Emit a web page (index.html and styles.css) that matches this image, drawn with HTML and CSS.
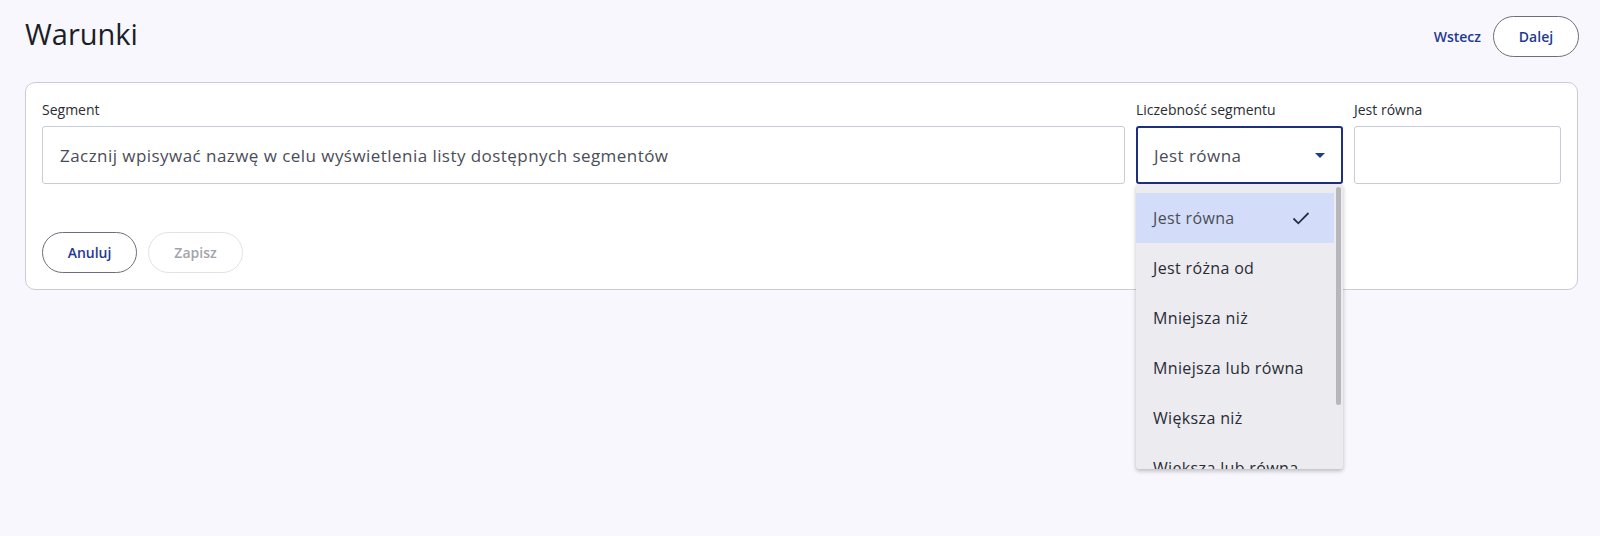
FILE: index.html
```html
<!DOCTYPE html>
<html lang="pl">

<head>
    <meta charset="UTF-8">
    <meta name="viewport" content="width=device-width, initial-scale=1.0">
    <title>Warunki</title>
    <link rel="stylesheet" href="styles.css">
</head>

<body>
    <div class="top">
        <h1 class="title">Warunki</h1>
        <div class="nav">
            <a class="link" href="#">Wstecz</a>
            <button class="btn">Dalej</button>
        </div>
    </div>

    <div class="card">
        <div class="fields">
            <div class="field">
                <label class="label">Segment</label>
                <div class="input">Zacznij wpisywać nazwę w celu wyświetlenia listy dostępnych segmentów</div>
            </div>
            <div class="field drop">
                <label class="label">Liczebność segmentu</label>
                <div class="input select">
                    <span>Jest równa</span>
                    <svg class="caret" width="10" height="5" viewBox="0 0 10 5"><path d="M0 0h10L5 5z" fill="#1f3a93"/></svg>
                </div>
                <ul class="menu">
                    <li class="item on">Jest równa
                        <svg class="check" width="18" height="14" viewBox="0 0 18 14"><path d="M1.5 7.5l4.8 4.8L16.5 2" fill="none" stroke="#2a2f45" stroke-width="1.8"/></svg>
                    </li>
                    <li class="item">Jest różna od</li>
                    <li class="item">Mniejsza niż</li>
                    <li class="item">Mniejsza lub równa</li>
                    <li class="item">Większa niż</li>
                    <li class="item">Większa lub równa</li>
                </ul>
            </div>
            <div class="field">
                <label class="label">Jest równa</label>
                <div class="input"></div>
            </div>
        </div>
        <div class="actions">
            <button class="btn">Anuluj</button>
            <button class="btn off">Zapisz</button>
        </div>
    </div>
</body>

</html>
```

FILE: styles.css
```css
* {
    margin: 0;
    padding: 0;
    box-sizing: border-box;
    list-style: none;
}
html,
body {
    min-height: 100vh;
}
body {
    background: #f7f7fd;
    font-family: "Open Sans", "Noto Sans", sans-serif;
    color: #23252d;
}
.top {
    display: flex;
    justify-content: space-between;
    align-items: flex-start;
    padding: 16px 21px 0 25px;
}
.title {
    font-size: 29px;
    font-weight: 400;
    line-height: 36px;
    color: #1c1e26;
}
.nav {
    display: flex;
    align-items: center;
    gap: 12px;
}
.link {
    color: #1f3a93;
    font-size: 14px;
    font-weight: 600;
    text-decoration: none;
}
.btn {
    font-family: inherit;
    font-size: 14px;
    font-weight: 600;
    color: #1f3a93;
    background: #fff;
    border: 1px solid #6c6f7a;
    border-radius: 21px;
    height: 41px;
    width: 86px;
    cursor: pointer;
}
.card {
    margin: 25px 22px 0 25px;
    background: #fff;
    border: 1px solid #c9cbd9;
    border-radius: 10px;
    padding: 17px 16px 16px 16px;
}
.fields {
    display: grid;
    grid-template-columns: 1fr 207px 207px;
    gap: 11px;
}
.field {
    display: flex;
    flex-direction: column;
    gap: 6px;
}
.drop {
    position: relative;
}
.label {
    font-size: 14px;
    line-height: 20px;
    color: #2a2c33;
}
.input {
    height: 58px;
    border: 1px solid #c9cbd9;
    border-radius: 3px;
    padding: 0 17px;
    display: flex;
    align-items: center;
    font-size: 17px;
    color: #4a4d57;
    letter-spacing: 0.45px;
}
.select {
    border: 2px solid #1f2f80;
    justify-content: space-between;
    padding: 0 16px;
}
.menu {
    position: absolute;
    top: 84px;
    left: 0;
    width: 207px;
    height: 285px;
    background: #ebebf0;
    box-shadow: 0 2px 4px rgba(0, 0, 0, 0.25);
    border-radius: 3px;
    padding-top: 9px;
    overflow: hidden;
    z-index: 2;
}
.menu::after {
    content: "";
    position: absolute;
    top: 3px;
    right: 2px;
    width: 5px;
    height: 218px;
    background: #b6b6bb;
    border-radius: 3px;
}
.item {
    height: 50px;
    width: 198px;
    display: flex;
    align-items: center;
    justify-content: space-between;
    padding: 0 24px 0 17px;
    font-size: 16px;
    color: #2a2c33;
    letter-spacing: 0.35px;
}
.item.on {
    background: #d3ddf9;
    color: #4a4d57;
}
.actions {
    display: flex;
    gap: 11px;
    margin-top: 48px;
}
.actions .btn {
    width: 95px;
    height: 41px;
    border-radius: 21px;
}
.actions .btn.off {
    color: #a3a4ab;
    border-color: #e1e2e8;
    cursor: default;
}
```
